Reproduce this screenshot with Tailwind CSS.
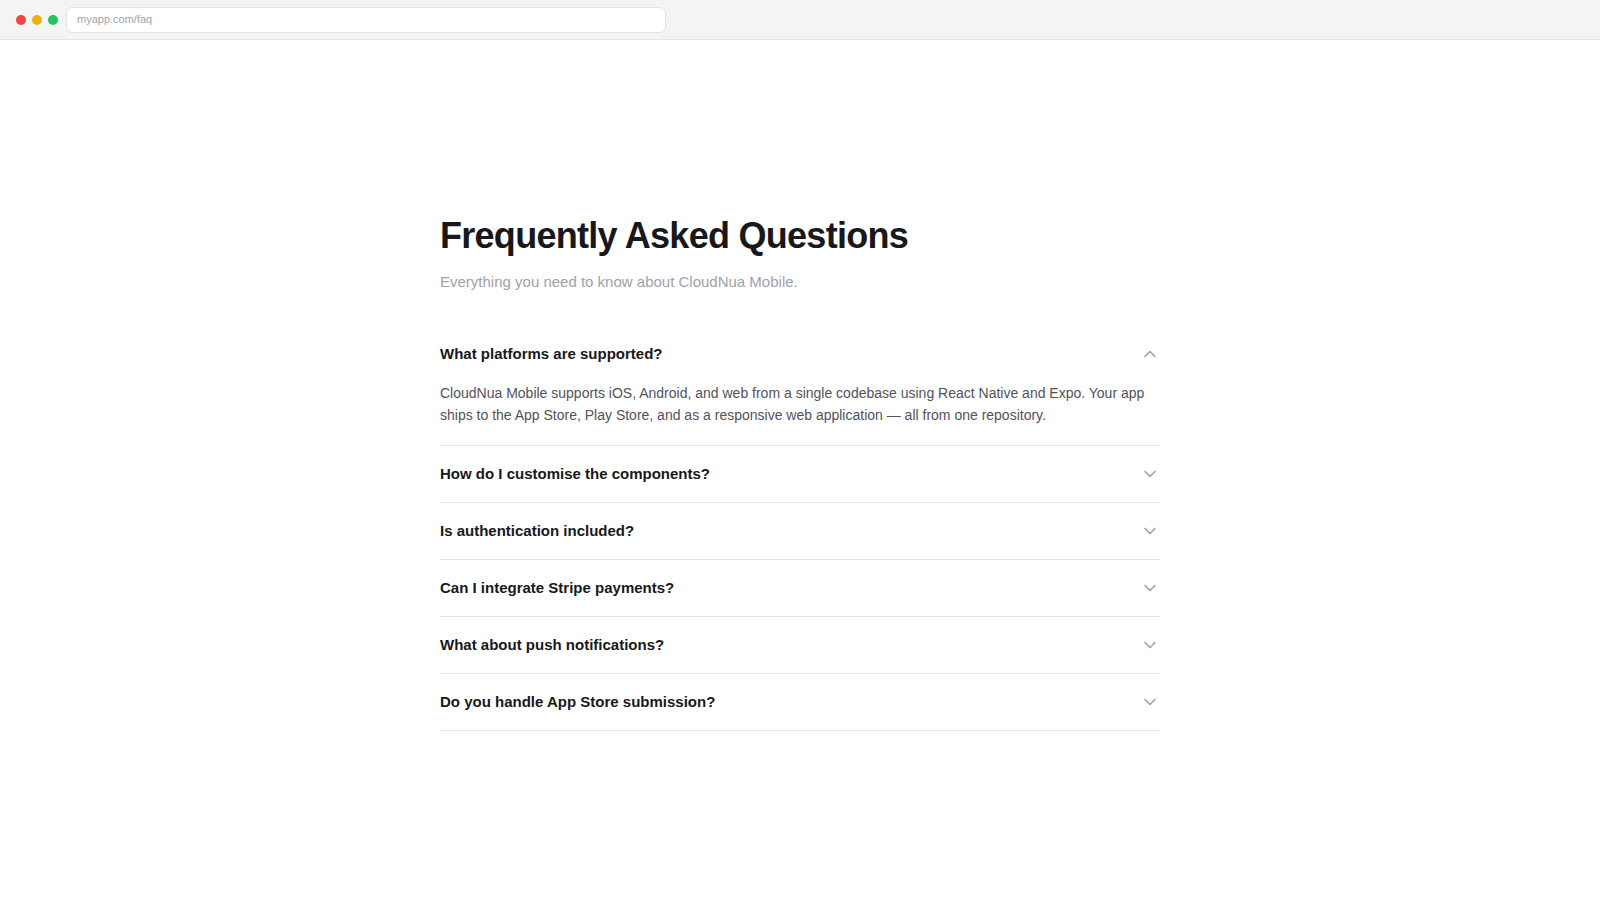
<!DOCTYPE html>
<html lang="en">
<head>
    <meta charset="UTF-8">
    <meta name="viewport" content="width=device-width, initial-scale=1.0">
    <title>Frequently Asked Questions</title>
    <script src="https://cdn.jsdelivr.net/npm/@tailwindcss/browser@4"></script>
</head>
<body class="min-h-screen flex flex-col bg-white text-zinc-900 font-['Liberation_Sans',Arial,sans-serif]">
    <!-- Browser bar -->
    <header class="flex items-center gap-2 h-10 px-4 bg-[#f4f4f5] border-b border-[#e4e4e7]">
        <div class="flex gap-1.5">
            <span class="size-2.5 rounded-full bg-[#ef4444]"></span>
            <span class="size-2.5 rounded-full bg-[#eab308]"></span>
            <span class="size-2.5 rounded-full bg-[#22c55e]"></span>
        </div>
        <input type="text" aria-label="Address" value="myapp.com/faq" class="flex-1 min-w-0 max-w-[600px] h-[26px] px-2.5 pb-0.5 bg-white border border-[#e4e4e7] rounded-md text-[11px] text-[#a1a1aa] focus:outline-none">
    </header>

    <main class="flex-1 flex flex-col justify-center w-full max-w-[768px] mx-auto px-6">
        <h1 class="text-[36px] leading-[54px] font-bold tracking-[-0.02em] text-[#18181b]">Frequently Asked Questions</h1>
        <p class="mt-2 text-[15px] leading-[22px] text-[#a1a1aa]">Everything you need to know about CloudNua Mobile.</p>

        <div class="mt-[33px]">
            <div class="border-b border-[#e4e4e7]">
                <h2>
                    <button type="button" aria-expanded="true" aria-controls="answer-platforms" class="w-full flex items-center justify-between py-[18px] text-left text-[15px] leading-5 font-semibold text-[#18181b] cursor-pointer">
                        What platforms are supported?
                        <svg class="size-5 shrink-0 text-[#a1a1aa]" viewBox="0 0 24 24" fill="none" stroke="currentColor" stroke-width="2" stroke-linecap="round" stroke-linejoin="round" aria-hidden="true"><path d="M18 15l-6-6-6 6"/></svg>
                    </button>
                </h2>
                <p id="answer-platforms" class="pb-[19px] text-sm leading-[22px] text-[#52525b]">CloudNua Mobile supports iOS, Android, and web from a single codebase using React Native and Expo. Your app ships to the App Store, Play Store, and as a responsive web application — all from one repository.</p>
            </div>
            <h2 class="border-b border-[#e4e4e7]">
                <button type="button" aria-expanded="false" class="w-full flex items-center justify-between py-[18px] text-left text-[15px] leading-5 font-semibold text-[#18181b] cursor-pointer">
                    How do I customise the components?
                    <svg class="size-5 shrink-0 text-[#a1a1aa]" viewBox="0 0 24 24" fill="none" stroke="currentColor" stroke-width="2" stroke-linecap="round" stroke-linejoin="round" aria-hidden="true"><path d="M6 9l6 6 6-6"/></svg>
                </button>
            </h2>
            <h2 class="border-b border-[#e4e4e7]">
                <button type="button" aria-expanded="false" class="w-full flex items-center justify-between py-[18px] text-left text-[15px] leading-5 font-semibold text-[#18181b] cursor-pointer">
                    Is authentication included?
                    <svg class="size-5 shrink-0 text-[#a1a1aa]" viewBox="0 0 24 24" fill="none" stroke="currentColor" stroke-width="2" stroke-linecap="round" stroke-linejoin="round" aria-hidden="true"><path d="M6 9l6 6 6-6"/></svg>
                </button>
            </h2>
            <h2 class="border-b border-[#e4e4e7]">
                <button type="button" aria-expanded="false" class="w-full flex items-center justify-between py-[18px] text-left text-[15px] leading-5 font-semibold text-[#18181b] cursor-pointer">
                    Can I integrate Stripe payments?
                    <svg class="size-5 shrink-0 text-[#a1a1aa]" viewBox="0 0 24 24" fill="none" stroke="currentColor" stroke-width="2" stroke-linecap="round" stroke-linejoin="round" aria-hidden="true"><path d="M6 9l6 6 6-6"/></svg>
                </button>
            </h2>
            <h2 class="border-b border-[#e4e4e7]">
                <button type="button" aria-expanded="false" class="w-full flex items-center justify-between py-[18px] text-left text-[15px] leading-5 font-semibold text-[#18181b] cursor-pointer">
                    What about push notifications?
                    <svg class="size-5 shrink-0 text-[#a1a1aa]" viewBox="0 0 24 24" fill="none" stroke="currentColor" stroke-width="2" stroke-linecap="round" stroke-linejoin="round" aria-hidden="true"><path d="M6 9l6 6 6-6"/></svg>
                </button>
            </h2>
            <h2 class="border-b border-[#e4e4e7]">
                <button type="button" aria-expanded="false" class="w-full flex items-center justify-between py-[18px] text-left text-[15px] leading-5 font-semibold text-[#18181b] cursor-pointer">
                    Do you handle App Store submission?
                    <svg class="size-5 shrink-0 text-[#a1a1aa]" viewBox="0 0 24 24" fill="none" stroke="currentColor" stroke-width="2" stroke-linecap="round" stroke-linejoin="round" aria-hidden="true"><path d="M6 9l6 6 6-6"/></svg>
                </button>
            </h2>
        </div>
    </main>
</body>
</html>
